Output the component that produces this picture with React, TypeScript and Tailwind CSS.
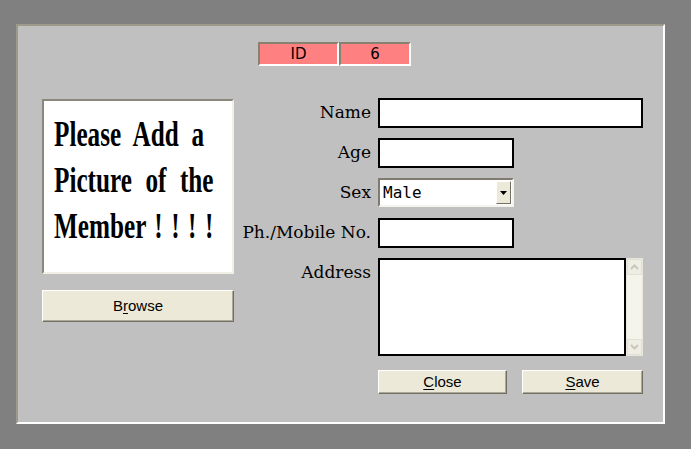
import React from 'react';

const serif = "font-['DejaVu_Serif',serif]";
const sans = "font-['Liberation_Sans',Arial,sans-serif]";

const btn =
  'flex items-center justify-center bg-[#ece9d8] border border-t-white border-l-white border-r-[#716f64] border-b-[#716f64] shadow-[inset_-1px_-1px_0_#aca899] text-[15px] text-black ' +
  sans;

const field = 'bg-white border-2 border-black';

const Row: React.FC<{ label: string; mt?: string; children: React.ReactNode }> = ({
  label,
  mt = '',
  children,
}) => (
  <div className={`flex ${mt}`}>
    <div className={`w-[130px] pt-[4px] text-right text-[17px] leading-[20px] text-black ${serif}`}>
      {label}
    </div>
    <div className="ml-[7px]">{children}</div>
  </div>
);

const Chevron = ({ up }: { up?: boolean }) => (
  <svg width="9" height="6" viewBox="0 0 9 6">
    <path
      d={up ? 'M1 5 L4.5 1.5 L8 5' : 'M1 1 L4.5 4.5 L8 1'}
      fill="none"
      stroke="#c9c7bd"
      strokeWidth="2"
    />
  </svg>
);

export default function App() {
  return (
    <div className="w-[691px] h-[449px] bg-[#808080] pt-[24px] pl-[16px]">
      <div className="w-[649px] h-[400px] bg-[#c0c0c0] border-2 border-t-[#9d9a8b] border-l-[#9d9a8b] border-r-white border-b-white pt-[16px]">
        {/* id strip */}
        <div className="flex ml-[240px] h-[24px] text-[15px] text-black font-['DejaVu_Sans',sans-serif]">
          <div className="w-[81px] flex items-center justify-center bg-[#ff8080] border-2 border-t-[#86826f] border-l-[#86826f] border-r-white border-b-white">
            ID
          </div>
          <div className="w-[72px] flex items-center justify-center bg-[#ff8080] border-2 border-t-[#86826f] border-l-[#86826f] border-r-white border-b-white">
            6
          </div>
        </div>

        <div className="flex mt-[32px]">
          {/* picture column */}
          <div className="ml-[24px] w-[192px] mt-[1px]">
            <div className="h-[175px] bg-white border-2 border-t-[#8a887c] border-l-[#8a887c] border-r-[#f1efe6] border-b-[#f1efe6] pt-[11px] pl-[10px] overflow-hidden">
              <div className="origin-left scale-x-[0.72] w-[250px] font-['Liberation_Serif',serif] font-bold text-[35px] leading-[46px] text-black whitespace-nowrap">
                <div className="[word-spacing:9px]">Please Add a</div>
                <div className="[word-spacing:10px]">Picture of the</div>
                <div className="[word-spacing:3px]">Member ! ! ! !</div>
              </div>
            </div>
            <button className={`${btn} w-[192px] h-[32px] mt-[16px]`}>
              B<span className="underline underline-offset-2">r</span>owse
            </button>
          </div>

          {/* form */}
          <div className="ml-[7px] flex flex-col">
            <Row label="Name">
              <input className={`${field} w-[265px] h-[30px] block`} />
            </Row>
            <Row label="Age" mt="mt-[10px]">
              <input className={`${field} w-[136px] h-[30px] block`} />
            </Row>
            <Row label="Sex" mt="mt-[10px]">
              <div className="w-[136px] h-[29px] flex items-center bg-white border-2 border-t-[#7f7c6f] border-l-[#7f7c6f] border-r-[#f4f3ee] border-b-[#f4f3ee]">
                <span className="flex-1 pl-[3px] text-[16px] text-black font-['DejaVu_Sans_Mono',monospace]">
                  Male
                </span>
                <div className="w-[15px] h-[23px] mr-[1px] flex items-center justify-center bg-[#ece9d8] border border-t-white border-l-white border-r-[#716f64] border-b-[#716f64]">
                  <svg width="7" height="4" viewBox="0 0 7 4">
                    <path d="M0 0 H7 L3.5 4 Z" fill="#000" />
                  </svg>
                </div>
              </div>
            </Row>
            <Row label="Ph./Mobile No." mt="mt-[11px]">
              <input className={`${field} w-[136px] h-[30px] block`} />
            </Row>
            <Row label="Address" mt="mt-[10px]">
              <div className="flex h-[98px]">
                <div className={`${field} w-[248px] h-full`} />
                <div className="w-[17px] h-full flex flex-col justify-between bg-[#f5f4ec] border border-[#e9e7dc]">
                  <div className="h-[16px] flex items-center justify-center bg-[#efeee5] border border-[#e2e0d4]">
                    <Chevron up />
                  </div>
                  <div className="h-[16px] flex items-center justify-center bg-[#efeee5] border border-[#e2e0d4]">
                    <Chevron />
                  </div>
                </div>
              </div>
            </Row>
            <div className="flex mt-[14px] ml-[137px]">
              <button className={`${btn} w-[129px] h-[24px]`}>
                <span className="underline underline-offset-2">C</span>lose
              </button>
              <button className={`${btn} w-[121px] h-[24px] ml-[15px]`}>
                <span className="underline underline-offset-2">S</span>ave
              </button>
            </div>
          </div>
        </div>
      </div>
    </div>
  );
}
